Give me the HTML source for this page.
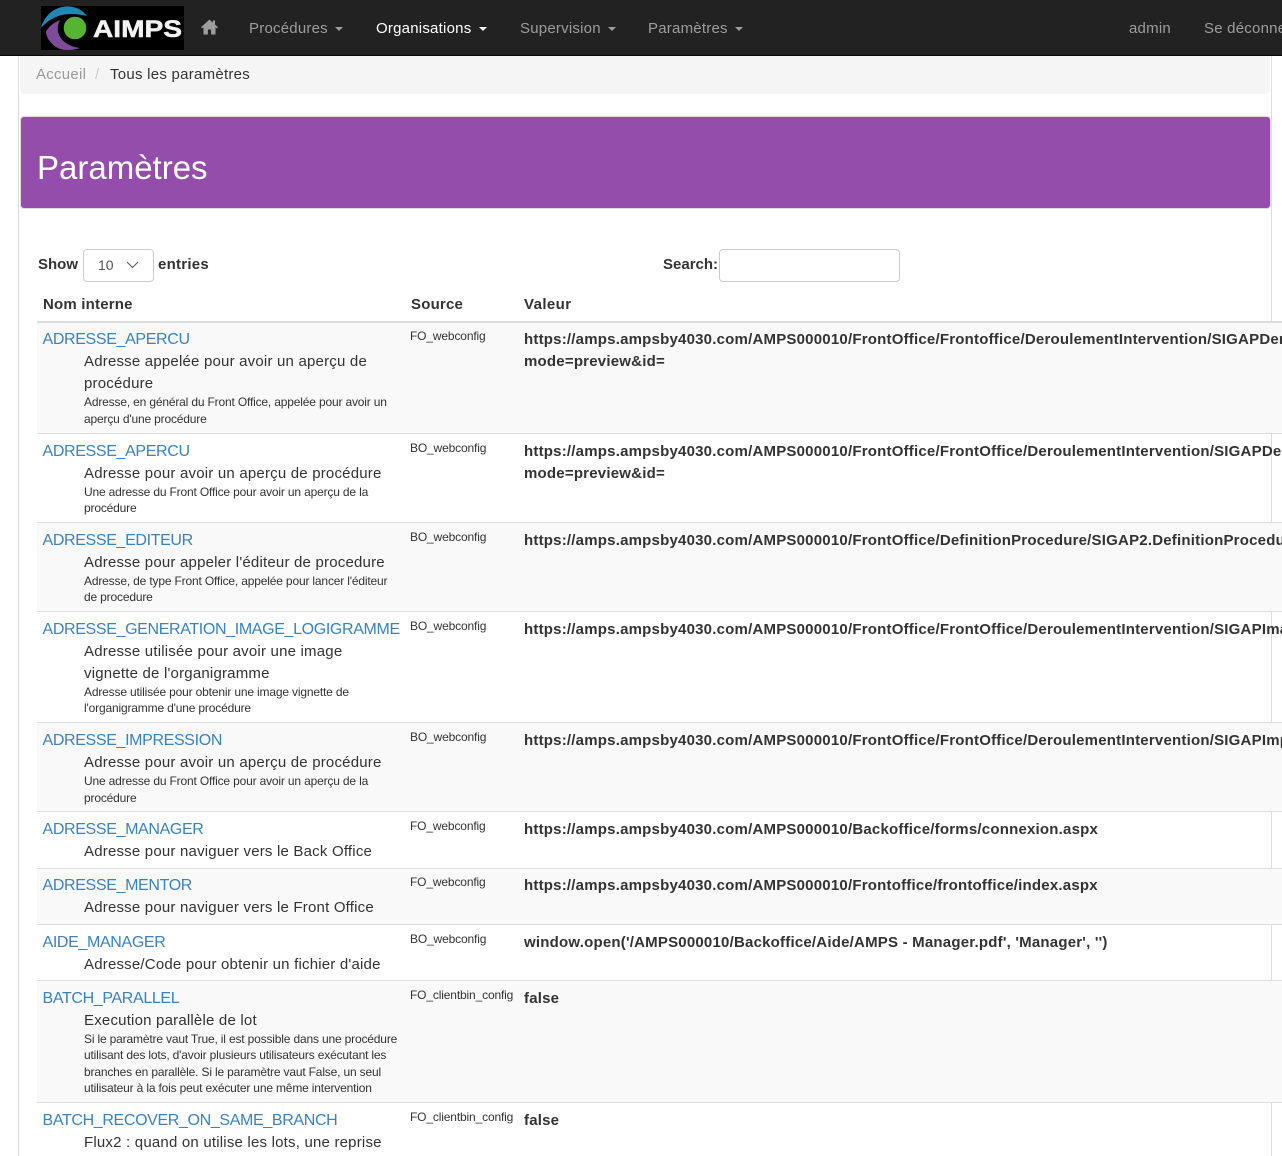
<!DOCTYPE html>
<html lang="fr">
<head>
<meta charset="utf-8">
<title>Paramètres</title>
<style>
html,body{margin:0;padding:0;background:#fff;}
body{width:1282px;height:1156px;overflow:hidden;position:relative;font-family:"Liberation Sans",sans-serif;color:#333;font-size:14px;}
#page{position:absolute;left:0;top:0;width:1282px;height:1156px;overflow:hidden;}
.a{position:absolute;white-space:nowrap;line-height:20px;}
.box{position:absolute;}
.nav{color:#9d9d9d;font-size:15px;top:19px;letter-spacing:.22px;}
.caret{position:absolute;top:27px;width:0;height:0;border-left:4px solid transparent;border-right:4px solid transparent;border-top:4px solid #9d9d9d;}
.l{color:#3a82c0;font-size:16px;left:42.5px;letter-spacing:-.35px;margin-top:1px;}
.d{font-size:15px;left:84px;color:#333;letter-spacing:.2px;margin-top:1px;}
.s{font-size:12px;left:84px;color:#333;letter-spacing:-.17px;}
.o{font-size:12px;left:410px;color:#333;letter-spacing:-.15px;}
.v{font-size:15px;font-weight:bold;left:524px;right:0;overflow:hidden;color:#333;letter-spacing:.21px;margin-top:1px;}
.h{font-size:15px;font-weight:bold;color:#333;margin-top:1px;}
.b{font-size:15px;letter-spacing:.26px;top:65px;}
</style>
</head>
<body>
<div id="page">
<!-- side lines -->
<div class="box" style="left:18px;top:56px;width:1px;height:1100px;background:#ddd"></div>
<div class="box" style="left:1271px;top:56px;width:1px;height:1100px;background:#ddd"></div>

<!-- navbar -->
<div class="box" style="left:0;top:0;width:1282px;height:55px;background:#222;border-bottom:1px solid #080808"></div>
<svg class="box" style="left:41px;top:6px" width="143" height="44" viewBox="0 0 143 44">
<rect width="143" height="44" fill="#000"/>
<path d="M0 22C3 11 11 3 21 1C30 -1 40 2 46 10C41 9 36 8 31 8C18 8 8 13 0 22Z" fill="#1f86b5"/>
<path d="M19 14C12 17 7 21 5 26C6 34 12 40 19 43C26 45 33 44 39 42C30 41 23 37 19 31C16 26 16 19 19 14Z" fill="#7d4c98"/>
<circle cx="34" cy="22" r="11.3" fill="#55b433"/>
<text x="52" y="31" font-family="Liberation Sans,sans-serif" font-size="24.5" font-weight="bold" fill="#f2f2f2" textLength="89" lengthAdjust="spacingAndGlyphs" stroke="#f2f2f2" stroke-width=".5">AIMPS</text>
</svg>
<svg class="box" style="left:201px;top:19px" width="17" height="16" viewBox="0 0 17 16">
<path d="M8.5 .5L0 8.3l1 1.1 1.5-1.2V15.5h4.4v-5h3.2v5h4.4V8.2l1.5 1.2 1-1.1-3-2.7V1.5h-2.2v2.2Z" fill="#9d9d9d"/>
</svg>
<span class="a nav" style="left:249px">Procédures</span><i class="caret" style="left:335px"></i>
<span class="a nav" style="left:376px;color:#fff">Organisations</span><i class="caret" style="left:479px;border-top-color:#fff"></i>
<span class="a nav" style="left:520px">Supervision</span><i class="caret" style="left:608px"></i>
<span class="a nav" style="left:648px">Paramètres</span><i class="caret" style="left:735px"></i>
<span class="a nav" style="left:1129px">admin</span>
<span class="a nav" style="left:1204px;right:0;overflow:hidden">Se déconnecter</span>

<!-- breadcrumb -->
<div class="box" style="left:20px;top:56px;width:1250px;height:38px;background:#f5f5f5;border-radius:0 0 4px 4px"></div>
<span class="a b" style="left:36px;color:#999">Accueil</span>
<span class="a b" style="left:95px;color:#ccc">/</span>
<span class="a b" style="left:110px;color:#333">Tous les paramètres</span>

<!-- header -->
<div class="box" style="left:20px;top:116px;width:1249px;height:91px;background:#944dab;border:1px solid #ddd;border-radius:4px"></div>
<span class="a" style="left:37px;top:148px;font-size:33px;line-height:40px;color:#fff">Paramètres</span>

<!-- controls -->
<span class="a h" style="left:38px;top:254px">Show</span>
<div class="box" style="left:83px;top:249px;width:69px;height:31px;border:1px solid #ccc;border-radius:4px;background:#fff"></div>
<span class="a" style="left:98px;top:255px;font-size:14px;color:#555">10</span>
<svg class="box" style="left:126px;top:261px" width="13" height="8" viewBox="0 0 13 8"><path d="M1 1l5.5 5.5L12 1" fill="none" stroke="#555" stroke-width="1"/></svg>
<span class="a h" style="left:158px;top:254px;letter-spacing:.25px">entries</span>
<span class="a h" style="left:663px;top:254px">Search:</span>
<div class="box" style="left:719px;top:249px;width:179px;height:31px;border:1px solid #ccc;border-radius:4px;background:#fff"></div>

<!-- table head -->
<span class="a h" style="left:43px;top:294px;letter-spacing:.2px">Nom interne</span>
<span class="a h" style="left:411px;top:294px;letter-spacing:.2px">Source</span>
<span class="a h" style="left:524px;top:294px;letter-spacing:.4px">Valeur</span>
<div class="box" style="left:37px;top:321px;width:1245px;height:2px;background:#ddd"></div>

<!-- row backgrounds and borders -->
<div class="box" style="left:37px;top:323px;width:1245px;height:110px;background:#f9f9f9"></div>
<div class="box" style="left:37px;top:523px;width:1245px;height:88px;background:#f9f9f9"></div>
<div class="box" style="left:37px;top:723px;width:1245px;height:88px;background:#f9f9f9"></div>
<div class="box" style="left:37px;top:869px;width:1245px;height:55px;background:#f9f9f9"></div>
<div class="box" style="left:37px;top:981px;width:1245px;height:121px;background:#f9f9f9"></div>
<div class="box" style="left:37px;top:433px;width:1245px;height:1px;background:#ddd"></div>
<div class="box" style="left:37px;top:522px;width:1245px;height:1px;background:#ddd"></div>
<div class="box" style="left:37px;top:611px;width:1245px;height:1px;background:#ddd"></div>
<div class="box" style="left:37px;top:722px;width:1245px;height:1px;background:#ddd"></div>
<div class="box" style="left:37px;top:811px;width:1245px;height:1px;background:#ddd"></div>
<div class="box" style="left:37px;top:868px;width:1245px;height:1px;background:#ddd"></div>
<div class="box" style="left:37px;top:924px;width:1245px;height:1px;background:#ddd"></div>
<div class="box" style="left:37px;top:980px;width:1245px;height:1px;background:#ddd"></div>
<div class="box" style="left:37px;top:1102px;width:1245px;height:1px;background:#ddd"></div>

<!-- row 1 -->
<span class="a l" style="top:329px">ADRESSE_APERCU</span>
<span class="a d" style="top:351px">Adresse appelée pour avoir un aperçu de</span>
<span class="a d" style="top:373px">procédure</span>
<span class="a s" style="top:392px">Adresse, en général du Front Office, appelée pour avoir un</span>
<span class="a s" style="top:409px">aperçu d'une procédure</span>
<span class="a o" style="top:326px">FO_webconfig</span>
<span class="a v" style="top:329px">https://amps.ampsby4030.com/AMPS000010/FrontOffice/Frontoffice/DeroulementIntervention/SIGAPDeroulement</span>
<span class="a v" style="top:351px">mode=preview&amp;id=</span>

<!-- row 2 -->
<span class="a l" style="top:441px">ADRESSE_APERCU</span>
<span class="a d" style="top:463px">Adresse pour avoir un aperçu de procédure</span>
<span class="a s" style="top:482px">Une adresse du Front Office pour avoir un aperçu de la</span>
<span class="a s" style="top:498px">procédure</span>
<span class="a o" style="top:438px">BO_webconfig</span>
<span class="a v" style="top:441px">https://amps.ampsby4030.com/AMPS000010/FrontOffice/FrontOffice/DeroulementIntervention/SIGAPDeroulement</span>
<span class="a v" style="top:463px">mode=preview&amp;id=</span>

<!-- row 3 -->
<span class="a l" style="top:530px">ADRESSE_EDITEUR</span>
<span class="a d" style="top:552px">Adresse pour appeler l'éditeur de procedure</span>
<span class="a s" style="top:571px">Adresse, de type Front Office, appelée pour lancer l'éditeur</span>
<span class="a s" style="top:587px">de procedure</span>
<span class="a o" style="top:527px">BO_webconfig</span>
<span class="a v" style="top:530px">https://amps.ampsby4030.com/AMPS000010/FrontOffice/DefinitionProcedure/SIGAP2.DefinitionProcedure</span>

<!-- row 4 -->
<span class="a l" style="top:619px">ADRESSE_GENERATION_IMAGE_LOGIGRAMME</span>
<span class="a d" style="top:641px">Adresse utilisée pour avoir une image</span>
<span class="a d" style="top:663px">vignette de l'organigramme</span>
<span class="a s" style="top:682px">Adresse utilisée pour obtenir une image vignette de</span>
<span class="a s" style="top:698px">l'organigramme d'une procédure</span>
<span class="a o" style="top:616px">BO_webconfig</span>
<span class="a v" style="top:619px">https://amps.ampsby4030.com/AMPS000010/FrontOffice/FrontOffice/DeroulementIntervention/SIGAPImage</span>

<!-- row 5 -->
<span class="a l" style="top:730px">ADRESSE_IMPRESSION</span>
<span class="a d" style="top:752px">Adresse pour avoir un aperçu de procédure</span>
<span class="a s" style="top:771px">Une adresse du Front Office pour avoir un aperçu de la</span>
<span class="a s" style="top:788px">procédure</span>
<span class="a o" style="top:727px">BO_webconfig</span>
<span class="a v" style="top:730px">https://amps.ampsby4030.com/AMPS000010/FrontOffice/FrontOffice/DeroulementIntervention/SIGAPImpression</span>

<!-- row 6 -->
<span class="a l" style="top:819px">ADRESSE_MANAGER</span>
<span class="a d" style="top:841px">Adresse pour naviguer vers le Back Office</span>
<span class="a o" style="top:816px">FO_webconfig</span>
<span class="a v" style="top:819px">https://amps.ampsby4030.com/AMPS000010/Backoffice/forms/connexion.aspx</span>

<!-- row 7 -->
<span class="a l" style="top:875px">ADRESSE_MENTOR</span>
<span class="a d" style="top:897px">Adresse pour naviguer vers le Front Office</span>
<span class="a o" style="top:872px">FO_webconfig</span>
<span class="a v" style="top:875px">https://amps.ampsby4030.com/AMPS000010/Frontoffice/frontoffice/index.aspx</span>

<!-- row 8 -->
<span class="a l" style="top:932px">AIDE_MANAGER</span>
<span class="a d" style="top:954px">Adresse/Code pour obtenir un fichier d'aide</span>
<span class="a o" style="top:929px">BO_webconfig</span>
<span class="a v" style="top:932px">window.open('/AMPS000010/Backoffice/Aide/AMPS - Manager.pdf', 'Manager', '')</span>

<!-- row 9 -->
<span class="a l" style="top:988px">BATCH_PARALLEL</span>
<span class="a d" style="top:1010px">Execution parallèle de lot</span>
<span class="a s" style="top:1029px">Si le paramètre vaut True, il est possible dans une procédure</span>
<span class="a s" style="top:1045px">utilisant des lots, d'avoir plusieurs utilisateurs exécutant les</span>
<span class="a s" style="top:1062px">branches en parallèle. Si le paramètre vaut False, un seul</span>
<span class="a s" style="top:1078px">utilisateur à la fois peut exécuter une même intervention</span>
<span class="a o" style="top:985px">FO_clientbin_config</span>
<span class="a v" style="top:988px">false</span>

<!-- row 10 -->
<span class="a l" style="top:1110px">BATCH_RECOVER_ON_SAME_BRANCH</span>
<span class="a d" style="top:1132px">Flux2 : quand on utilise les lots, une reprise</span>
<span class="a o" style="top:1107px">FO_clientbin_config</span>
<span class="a v" style="top:1110px">false</span>
</div>
</body>
</html>
